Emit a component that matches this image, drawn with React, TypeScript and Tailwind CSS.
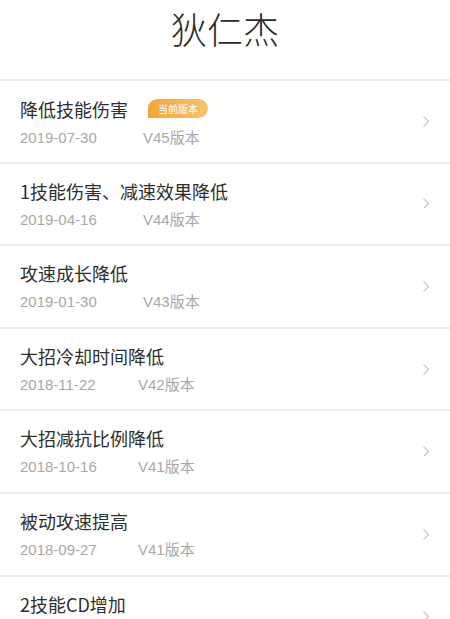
import React from 'react';

const font = { fontFamily: '"Noto Sans CJK SC", "Liberation Sans", sans-serif' };
const latin = { fontFamily: '"Liberation Sans", "Noto Sans CJK SC", sans-serif' };

const items = [
  { title: '降低技能伤害', date: '2019-07-30', ver: 'V45版本', current: true, w: 123 },
  { title: '1技能伤害、减速效果降低', date: '2019-04-16', ver: 'V44版本', w: 123 },
  { title: '攻速成长降低', date: '2019-01-30', ver: 'V43版本', w: 123 },
  { title: '大招冷却时间降低', date: '2018-11-22', ver: 'V42版本', w: 118 },
  { title: '大招减抗比例降低', date: '2018-10-16', ver: 'V41版本', w: 118 },
  { title: '被动攻速提高', date: '2018-09-27', ver: 'V41版本', w: 118 },
  { title: '2技能CD增加', date: '2018-08-21', ver: 'V40版本', w: 118 },
];

const Chevron = () => (
  <svg width="8" height="13" viewBox="0 0 8 13" fill="none">
    <path d="M1.5 1.5 L6.5 6.5 L1.5 11.5" stroke="#c8c8c8" strokeWidth="1.2" />
  </svg>
);

const App: React.FC = () => {
  return (
    <div className="w-[450px] h-[619px] overflow-hidden bg-white" style={font}>
      <div className="h-[79px] flex justify-center pt-[10px]">
        <h1 className="text-[36px] leading-none text-[#2a2a2a] font-light">狄仁杰</h1>
      </div>
      {items.map((it, i) => (
        <div key={i}>
          <div className="h-[2px] bg-[#ececec]" />
          <div className="h-[80.6px] flex items-center pl-[20px] pr-[20px]">
            <div className="flex-1 pt-[18px] self-start">
              <div className="flex items-center">
                <span className="text-[18px] leading-none text-[#2e2e2e]">{it.title}</span>
                {it.current && (
                  <span className="ml-[20px] h-[19px] w-[60px] flex items-center justify-center rounded-full rounded-bl-[3px] bg-gradient-to-r from-[#f3a436] to-[#f7c46a] text-white text-[10px] leading-none">
                    当前版本
                  </span>
                )}
              </div>
              <div className="flex mt-[12px] text-[15px] leading-none text-[#a8a8a8]" style={latin}>
                <span style={{ width: it.w }}>{it.date}</span>
                <span>{it.ver}</span>
              </div>
            </div>
            <Chevron />
          </div>
        </div>
      ))}
    </div>
  );
};

export default App;
